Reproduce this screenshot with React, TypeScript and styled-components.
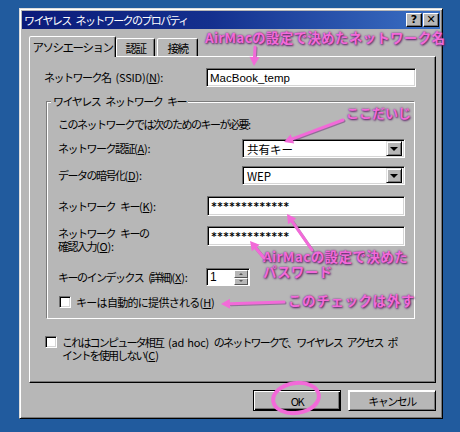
import React from 'react';
import styled, { createGlobalStyle } from 'styled-components';

const PINK = '#f26ad8';
const FACE = '#b7b7b7';

const GlobalStyle = createGlobalStyle`
  html, body { margin: 0; padding: 0; background: #215b9e; }
  body { font-family: "Noto Sans CJK JP", sans-serif; }
  * { box-sizing: border-box; }
`;

const Page = styled.div`
  position: relative;
  width: 460px;
  height: 432px;
  overflow: hidden;
  background: #215b9e;
  padding: 8px 0 0 19px;
`;

const Window = styled.div`
  width: 424px;
  height: 411px;
  background: ${FACE};
  border: 1px solid;
  border-color: #dcdcdc #000 #000 #dcdcdc;
  box-shadow: inset 1px 1px 0 #fff, inset -1px -1px 0 #777;
  padding: 2px;
  display: flex;
  flex-direction: column;
`;

const TitleBar = styled.div`
  height: 18px;
  display: flex;
  align-items: center;
  padding-left: 2px;
  background: linear-gradient(to right, #0b1b7a 0%, #14308e 45%, #3a70c4 100%);
  color: #fff;
  font-size: 11px;
  letter-spacing: -1.6px;
  word-spacing: 4px;
`;

const TitleText = styled.span`
  flex: 1;
  white-space: nowrap;
`;

const TitleBtn = styled.div`
  width: 16px;
  height: 14px;
  margin-right: 1px;
  background: ${FACE};
  border: 1px solid;
  border-color: #fff #000 #000 #fff;
  box-shadow: inset -1px -1px 0 #777;
  color: #000;
  font-family: "DejaVu Sans", sans-serif;
  font-weight: bold;
  font-size: 11px;
  letter-spacing: 0;
  line-height: 12px;
  text-align: center;
`;

const Body = styled.div`
  padding: 7px 0 0 7px;
  display: flex;
  flex-direction: column;
  font-size: 11px;
  letter-spacing: -1.5px;
  word-spacing: 4px;
  color: #000;
`;

const Lat = styled.span`
  letter-spacing: -0.2px;
  word-spacing: 1px;
`;

const TabStrip = styled.div`
  display: flex;
  align-items: flex-end;
  height: 20px;
  position: relative;
  z-index: 1;
`;

const Tab = styled.div<{ $w: number; $active?: boolean; $ml?: number }>`
  width: ${p => p.$w}px;
  height: ${p => (p.$active ? 21 : 18)}px;
  margin-left: ${p => p.$ml ?? 0}px;
  margin-bottom: ${p => (p.$active ? -1 : 0)}px;
  background: ${FACE};
  border: 1px solid;
  border-bottom: none;
  border-color: #fff #000 transparent #fff;
  border-radius: 2px 2px 0 0;
  box-shadow: inset -1px 0 0 #777;
  font-size: 11.5px;
  display: flex;
  align-items: ${p => (p.$active ? 'flex-start' : 'center')};
  padding-top: ${p => (p.$active ? 2 : 0)}px;
  justify-content: center;
  white-space: nowrap;
`;

const Panel = styled.div`
  width: 407px;
  height: 327px;
  border: 1px solid;
  border-color: #fff #000 #000 #fff;
  box-shadow: inset -1px -1px 0 #777;
  display: flex;
  flex-direction: column;
`;

const SsidRow = styled.div`
  display: flex;
  align-items: center;
  height: 19px;
  margin: 11px 0 0 14px;
`;

const Label = styled.span<{ $w?: number }>`
  width: ${p => (p.$w ? `${p.$w}px` : 'auto')};
  white-space: nowrap;
  line-height: 13px;
`;

const Field = styled.div<{ $w: number; $h?: number; $mono?: boolean }>`
  width: ${p => p.$w}px;
  height: ${p => p.$h ?? 20}px;
  background: #fff;
  border: 1px solid;
  border-color: #6e6e6e #fff #fff #6e6e6e;
  box-shadow: inset 1px 1px 0 #000, inset -1px -1px 0 #d6d6d6;
  display: flex;
  align-items: center;
  padding-left: 3px;
  font-family: ${p => (p.$mono ? '"DejaVu Sans Mono", monospace' : '"Liberation Sans", sans-serif')};
  font-size: ${p => (p.$mono ? 10 : 11.5)}px;
  font-weight: ${p => (p.$mono ? 'bold' : 'normal')};
  letter-spacing: 0;
  justify-self: end;
`;

const SelectBox = styled(Field)`
  padding-left: 4px;
  padding-right: 2px;
  font-family: "Noto Sans CJK JP", sans-serif;
  font-size: 11.5px;
  justify-content: space-between;
`;

const DropBtn = styled.div`
  width: 16px;
  height: 15px;
  background: ${FACE};
  border: 1px solid;
  border-color: #e0e0e0 #000 #000 #e0e0e0;
  box-shadow: inset 1px 1px 0 #fff, inset -1px -1px 0 #777;
  display: flex;
  align-items: center;
  justify-content: center;
`;

const Tri = styled.div`
  width: 0;
  height: 0;
  border-left: 4px solid transparent;
  border-right: 4px solid transparent;
  border-top: 4px solid #000;
`;

const Group = styled.div`
  position: relative;
  width: 369px;
  height: 218px;
  margin: 14px 0 0 16px;
  border: 1px solid;
  border-color: #7c7c7c #fff #fff #7c7c7c;
  box-shadow: inset 1px 1px 0 #fff, 1px 1px 0 #7c7c7c inset;
  padding: 0 9px 0 11px;
  display: flex;
  flex-direction: column;
`;

const Legend = styled.span`
  position: absolute;
  left: 4px;
  top: -8px;
  padding: 0 2px;
  background: ${FACE};
  line-height: 14px;
  white-space: nowrap;
`;

const Row = styled.div<{ $mt: number; $h: number; $top?: boolean }>`
  display: grid;
  grid-template-columns: 148px 1fr;
  align-items: ${p => (p.$top ? 'start' : 'center')};
  margin-top: ${p => p.$mt}px;
  height: ${p => p.$h}px;
`;

const Desc = styled.div`
  margin-top: 15px;
  height: 14px;
  line-height: 14px;
  white-space: nowrap;
`;

const TwoLine = styled.span`
  line-height: 13px;
  padding-top: 1px;
  white-space: nowrap;
`;

const Spin = styled.div`
  width: 44px;
  height: 18px;
  display: flex;
  background: #fff;
  border: 1px solid;
  border-color: #6e6e6e #fff #fff #6e6e6e;
  box-shadow: inset 1px 1px 0 #000;
  font-family: "Liberation Sans", sans-serif;
  font-size: 12px;
  letter-spacing: 0;
`;

const SpinText = styled.span`
  flex: 1;
  padding: 1px 0 0 3px;
`;

const SpinBtns = styled.div`
  width: 15px;
  display: flex;
  flex-direction: column;
  padding: 1px 1px 0 0;
`;

const SpinBtn = styled.div`
  flex: 1;
  background: ${FACE};
  border: 1px solid;
  border-color: #fff #555 #555 #fff;
  display: flex;
  align-items: center;
  justify-content: center;
`;

const MiniTri = styled.div<{ $up?: boolean }>`
  width: 0;
  height: 0;
  border-left: 2px solid transparent;
  border-right: 2px solid transparent;
  ${p => (p.$up ? 'border-bottom: 2px solid #555;' : 'border-top: 2px solid #555;')}
`;

const CheckRow = styled.div<{ $mt: number; $ml: number }>`
  display: flex;
  align-items: flex-start;
  gap: 5px;
  margin: ${p => p.$mt}px 0 0 ${p => p.$ml}px;
`;

const Check = styled.div`
  flex: none;
  width: 12px;
  height: 12px;
  background: #fff;
  border: 1px solid;
  border-color: #6e6e6e #fff #fff #6e6e6e;
  box-shadow: inset 1px 1px 0 #000, inset -1px -1px 0 #d6d6d6;
`;

const CheckText = styled.span<{ $ls?: number }>`
  line-height: 12.5px;
  letter-spacing: ${p => p.$ls ?? -1.5}px;
  white-space: nowrap;
`;

const ButtonRow = styled.div`
  width: 407px;
  display: flex;
  justify-content: flex-end;
  gap: 7px;
  margin-top: 7px;
`;

const Button = styled.div<{ $default?: boolean }>`
  width: 88px;
  height: 21px;
  background: ${FACE};
  border: 1px solid #000;
  box-shadow: ${p =>
    p.$default
      ? 'inset 1px 1px 0 #fff, inset -1px -1px 0 #000, inset -2px -2px 0 #777'
      : 'inset 1px 1px 0 #fff, inset -1px -1px 0 #777'};
  border-color: ${p => (p.$default ? '#000' : '#fff #000 #000 #fff')};
  display: flex;
  align-items: center;
  justify-content: center;
  font-size: 11px;
`;

const Note = styled.div<{ $x: number; $y: number; $size?: number; $ls?: number }>`
  position: absolute;
  left: ${p => p.$x}px;
  top: ${p => p.$y}px;
  color: ${PINK};
  font-family: "Noto Sans CJK JP", sans-serif;
  font-weight: bold;
  font-size: ${p => p.$size ?? 13}px;
  line-height: 15px;
  letter-spacing: ${p => p.$ls ?? 0}px;
  white-space: nowrap;
  text-shadow: 1px 1px 2px #5a2266, 0 0 2px #7a3088;
`;

const Overlay = styled.svg`
  position: absolute;
  left: 0;
  top: 0;
  pointer-events: none;
`;

function Arrow({ x1, y1, x2, y2 }: { x1: number; y1: number; x2: number; y2: number }) {
  const dx = x2 - x1;
  const dy = y2 - y1;
  const len = Math.hypot(dx, dy);
  const ux = dx / len;
  const uy = dy / len;
  const hl = 9;
  const hw = 5;
  const bx = x2 - ux * hl;
  const by = y2 - uy * hl;
  const px = -uy;
  const py = ux;
  const pts = `${x2},${y2} ${bx + px * hw},${by + py * hw} ${bx - px * hw},${by - py * hw}`;
  return (
    <g>
      <line x1={x1 + 1} y1={y1 + 1} x2={bx + 1} y2={by + 1} stroke="#6a2a76" strokeOpacity={0.5} strokeWidth={3} strokeLinecap="round" />
      <line x1={x1} y1={y1} x2={bx} y2={by} stroke={PINK} strokeWidth={3} strokeLinecap="round" />
      <polygon points={pts} fill={PINK} />
    </g>
  );
}

export default function App() {
  return (
    <Page>
      <GlobalStyle />
      <Window>
        <TitleBar>
          <TitleText>ワイヤレス ネットワークのプロパティ</TitleText>
          <TitleBtn>?</TitleBtn>
          <TitleBtn>✕</TitleBtn>
        </TitleBar>
        <Body>
          <TabStrip>
            <Tab $w={87} $active>アソシエーション</Tab>
            <Tab $w={39}>認証</Tab>
            <Tab $w={41} $ml={2}>接続</Tab>
          </TabStrip>
          <Panel>
            <SsidRow>
              <Label $w={162}>
                ネットワーク名 <Lat>(SSID)(<u>N</u>):</Lat>
              </Label>
              <Field $w={210} $h={19}>MacBook_temp</Field>
            </SsidRow>
            <Group>
              <Legend>ワイヤレス ネットワーク キー</Legend>
              <Desc>このネットワークでは次のためのキーが必要:</Desc>
              <Row $mt={8} $h={19}>
                <Label>ネットワーク認証<Lat>(<u>A</u>):</Lat></Label>
                <SelectBox $w={163} $h={19}>
                  共有キー
                  <DropBtn><Tri /></DropBtn>
                </SelectBox>
              </Row>
              <Row $mt={8} $h={19}>
                <Label>データの暗号化<Lat>(<u>D</u>):</Lat></Label>
                <SelectBox $w={163} $h={19}>
                  WEP
                  <DropBtn><Tri /></DropBtn>
                </SelectBox>
              </Row>
              <Row $mt={11} $h={20}>
                <Label>ネットワーク キー<Lat>(<u>K</u>):</Lat></Label>
                <Field $w={198} $mono>*************</Field>
              </Row>
              <Row $mt={10} $h={27} $top>
                <TwoLine>
                  ネットワーク キーの
                  <br />
                  確認入力<Lat>(<u>O</u>):</Lat>
                </TwoLine>
                <Field $w={198} $mono>*************</Field>
              </Row>
              <Row $mt={15} $h={18}>
                <Label>キーのインデックス (詳細)<Lat>(<u>X</u>):</Lat></Label>
                <Spin>
                  <SpinText>1</SpinText>
                  <SpinBtns>
                    <SpinBtn><MiniTri $up /></SpinBtn>
                    <SpinBtn><MiniTri /></SpinBtn>
                  </SpinBtns>
                </Spin>
              </Row>
              <CheckRow $mt={10} $ml={1}>
                <Check />
                <CheckText $ls={-0.7}>キーは自動的に提供される<Lat>(<u>H</u>)</Lat></CheckText>
              </CheckRow>
            </Group>
            <CheckRow $mt={17} $ml={15}>
              <Check />
              <CheckText $ls={-1.8}>
                これはコンピュータ相互 <Lat>(ad hoc)</Lat> のネットワークで、ワイヤレス アクセス ポ
                <br />
                イントを使用しない<Lat>(<u>C</u>)</Lat>
              </CheckText>
            </CheckRow>
          </Panel>
          <ButtonRow>
            <Button $default>OK</Button>
            <Button>キャンセル</Button>
          </ButtonRow>
        </Body>
      </Window>

      <Note $x={205} $y={30} $size={13.5} $ls={0.3}>AirMacの設定で決めたネットワーク名</Note>
      <Note $x={346} $y={105} $size={13}>ここだいじ</Note>
      <Note $x={263} $y={249} $size={13.5} $ls={0.4}>
        AirMacの設定で決めた
        <br />
        パスワード
      </Note>
      <Note $x={288} $y={293} $size={13.5} $ls={0.6}>このチェックは外す</Note>

      <Overlay width={460} height={432} viewBox="0 0 460 432">
        <Arrow x1={255} y1={47} x2={254} y2={66} />
        <Arrow x1={343} y1={120} x2={284} y2={142} />
        <Arrow x1={312} y1={250} x2={287} y2={214} />
        <Arrow x1={264} y1={258} x2={250} y2={241} />
        <Arrow x1={284} y1={302} x2={221} y2={304} />
        <ellipse cx={296} cy={398} rx={23} ry={15} fill="none" stroke={PINK} strokeWidth={4} transform="rotate(-8 296 398)" />
      </Overlay>
    </Page>
  );
}
